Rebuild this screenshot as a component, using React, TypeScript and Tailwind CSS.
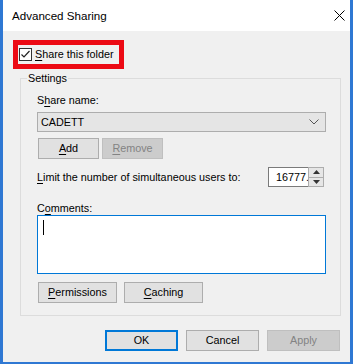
import React from 'react';

const font = { fontFamily: '"Liberation Sans", Arial, sans-serif' };

const Btn = ({
  children,
  w,
  disabled = false,
  primary = false,
}: {
  children: React.ReactNode;
  w: string;
  disabled?: boolean;
  primary?: boolean;
}) => {
  const base = 'h-[21px] flex items-center justify-center text-[10.8px] leading-none';
  const look = disabled
    ? 'bg-[#cccccc] border border-[#bfbfbf] text-[#838383]'
    : primary
    ? 'bg-[#e1e1e1] border-2 border-[#0078d7] text-black'
    : 'bg-[#e1e1e1] border border-[#adadad] text-black';
  return <div className={`${base} ${look} ${w}`}>{children}</div>;
};

const U = ({ children }: { children: React.ReactNode }) => (
  <span className="underline underline-offset-2">{children}</span>
);

export default function App() {
  return (
    <div
      className="w-[353px] h-[364px] bg-[#f0f0f0] border-x-[3px] border-b-2 border-[#2f78d3] flex flex-col text-black"
      style={font}
    >
      {/* title bar */}
      <div className="h-[31px] bg-white flex items-center justify-between pl-[9px] pr-[5px] shrink-0">
        <span className="text-[11.6px]">Advanced Sharing</span>
        <svg width="11" height="11" viewBox="0 0 11 11" className="mb-[1px]">
          <path d="M0.5 0.5 L10.5 10.5 M10.5 0.5 L0.5 10.5" stroke="#000" strokeWidth="1" />
        </svg>
      </div>

      {/* share checkbox, highlighted */}
      <div className="mt-[9px] ml-[10px] w-[111px] h-[29px] border-[5px] border-[#ec0a14] flex items-center pl-[1px] gap-[3px]">
        <div className="w-[13px] h-[13px] border border-[#333333] bg-white flex items-center justify-center">
          <svg width="11" height="11" viewBox="0 0 11 11">
            <path d="M1.5 5.5 L4 8 L9.5 2" fill="none" stroke="#222" strokeWidth="1.2" />
          </svg>
        </div>
        <span className="text-[10.8px] leading-none whitespace-nowrap">
          <U>S</U>hare this folder
        </span>
      </div>

      {/* settings group */}
      <fieldset className="mt-[1px] ml-[17px] w-[321px] border border-[#dcdcdc] pl-[16px] pr-[14px] pb-[12px]">
        <legend className="text-[10.8px] leading-[16px] -ml-[10px] px-[1px]">Settings</legend>

        <div className="mt-[6px] text-[10.8px] leading-[16px]">
          S<U>h</U>are name:
        </div>

        <div className="mt-[4px] w-[289px] h-[20px] bg-[#e5e5e5] border border-[#adadad] flex items-center justify-between pl-[3px] pr-[6px]">
          <span className="text-[10.8px] leading-none">CADETT</span>
          <svg width="10" height="6" viewBox="0 0 10 6">
            <path d="M0.5 0.5 L5 5 L9.5 0.5" fill="none" stroke="#555" strokeWidth="1" />
          </svg>
        </div>

        <div className="mt-[6px] ml-[1px] flex gap-[3px]">
          <Btn w="w-[61px]">
            <U>A</U>dd
          </Btn>
          <Btn w="w-[61px]" disabled>
            <U>R</U>emove
          </Btn>
        </div>

        <div className="mt-[8px] h-[20px] flex items-center justify-between pr-[2px]">
          <span className="text-[10.8px] leading-none whitespace-nowrap">
            <U>L</U>imit the number of simultaneous users to:
          </span>
          <div className="flex h-[20px]">
            <div className="w-[40px] h-full bg-white border border-[#7a7a7a] border-r-0 flex items-center pl-[7px] overflow-hidden">
              <span className="text-[10.8px] leading-none whitespace-nowrap">16777.</span>
            </div>
            <div className="w-[16px] h-full border border-[#adadad] bg-[#e6e6e6] flex flex-col">
              <div className="flex-1 flex items-center justify-center border-b border-[#adadad]">
                <svg width="7" height="4" viewBox="0 0 7 4">
                  <path d="M3.5 0 L7 4 L0 4 Z" fill="#333" />
                </svg>
              </div>
              <div className="flex-1 flex items-center justify-center">
                <svg width="7" height="4" viewBox="0 0 7 4">
                  <path d="M0 0 L7 0 L3.5 4 Z" fill="#333" />
                </svg>
              </div>
            </div>
          </div>
        </div>

        <div className="mt-[15px] text-[10.8px] leading-[12px] h-[12px]">
          C<U>o</U>mments:
        </div>
        <div className="mt-[1px] w-[289px] h-[59px] bg-white border border-[#0078d7] pl-[5px] pt-[4px]">
          <div className="w-[1px] h-[15px] bg-black" />
        </div>

        <div className="mt-[8px] ml-[1px] flex gap-[7px]">
          <Btn w="w-[79px]">
            <U>P</U>ermissions
          </Btn>
          <Btn w="w-[79px]">
            <U>C</U>aching
          </Btn>
        </div>
      </fieldset>

      {/* dialog buttons */}
      <div className="mt-[14px] flex justify-end gap-[8px] pr-[10px]">
        <Btn w="w-[73px]" primary>
          OK
        </Btn>
        <Btn w="w-[73px]">Cancel</Btn>
        <Btn w="w-[73px]" disabled>
          Apply
        </Btn>
      </div>
    </div>
  );
}
